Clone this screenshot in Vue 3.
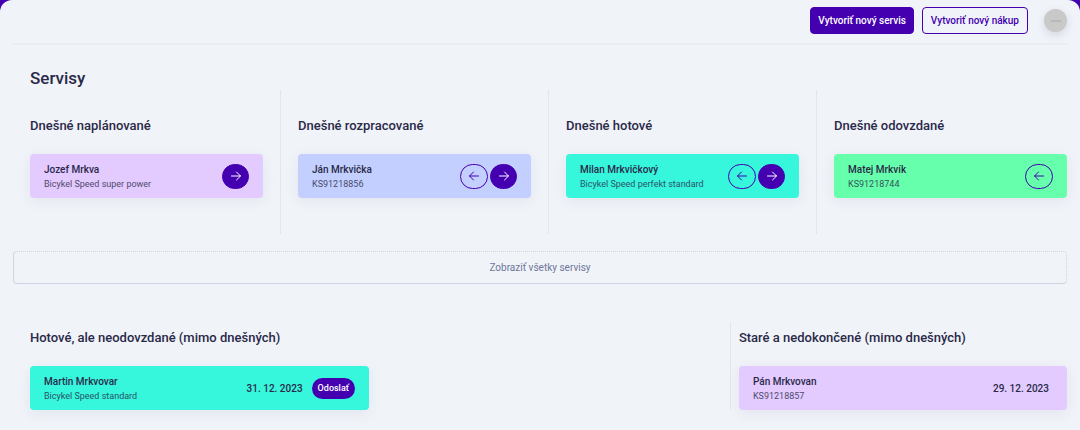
<script setup>
const columns = [
  { title: 'Dnešné naplánované', name: 'Jozef Mrkva', detail: 'Bicykel Speed super power', tone: 'lilac', back: false, next: true },
  { title: 'Dnešné rozpracované', name: 'Ján Mrkvička', detail: 'KS91218856', tone: 'blue', back: true, next: true },
  { title: 'Dnešné hotové', name: 'Milan Mrkvičkový', detail: 'Bicykel Speed perfekt standard', tone: 'teal', back: true, next: true },
  { title: 'Dnešné odovzdané', name: 'Matej Mrkvík', detail: 'KS91218744', tone: 'green', back: true, next: false }
]
</script>

<template>
  <div class="panel">
    <header class="topbar">
      <button type="button" class="btn primary">Vytvoriť nový servis</button>
      <button type="button" class="btn outline">Vytvoriť nový nákup</button>
      <button type="button" class="avatar" aria-label="Profil"><span class="avatar-mark"></span></button>
    </header>

    <main>
      <h1>Servisy</h1>

      <div class="board">
        <section v-for="col in columns" :key="col.title" class="column">
          <h2>{{ col.title }}</h2>
          <article class="card" :class="col.tone">
            <div class="info">
              <h3>{{ col.name }}</h3>
              <p>{{ col.detail }}</p>
            </div>
            <div class="actions">
              <button v-if="col.back" type="button" class="round back" aria-label="Späť">
                <svg viewBox="0 0 12 12"><path d="M10.5 6h-9M5.5 2 1.5 6l4 4" /></svg>
              </button>
              <button v-if="col.next" type="button" class="round next" aria-label="Ďalej">
                <svg viewBox="0 0 12 12"><path d="M1.5 6h9M6.5 2l4 4-4 4" /></svg>
              </button>
            </div>
          </article>
        </section>
      </div>

      <button type="button" class="show-all">Zobraziť všetky servisy</button>

      <div class="lower">
        <section class="ready">
          <h2>Hotové, ale neodovzdané (mimo dnešných)</h2>
          <div class="ready-list">
            <article class="card teal">
              <div class="info">
                <h3>Martin Mrkvovar</h3>
                <p>Bicykel Speed standard</p>
              </div>
              <time datetime="2023-12-31">31. 12. 2023</time>
              <button type="button" class="send">Odoslať</button>
            </article>
          </div>
        </section>
        <section class="old">
          <h2>Staré a nedokončené (mimo dnešných)</h2>
          <article class="card lilac">
            <div class="info">
              <h3>Pán Mrkvovan</h3>
              <p>KS91218857</p>
            </div>
            <time datetime="2023-12-29" class="last">29. 12. 2023</time>
          </article>
        </section>
      </div>
    </main>
  </div>
</template>

<style>
body {
  margin: 0;
  background: #4400b0;
}
</style>

<style scoped>
.panel {
  box-sizing: border-box;
  min-height: 100vh;
  padding: 0 13px 20px;
  border-radius: 12px 12px 0 0;
  background: #f0f3f8;
  color: #2a2949;
  font-family: Roboto, sans-serif;
}
button {
  margin: 0;
  padding: 0;
  font-family: inherit;
  cursor: pointer;
}
h1, h2, h3, p {
  margin: 0;
  font-weight: 500;
}
.topbar {
  display: flex;
  justify-content: flex-end;
  align-items: center;
  padding: 7px 0 9px;
  border-bottom: 2px solid #eaedf2;
}
.btn {
  box-sizing: border-box;
  height: 27px;
  padding: 0 8px;
  border: 1px solid #4400b0;
  border-radius: 4px;
  font-size: 10px;
  font-weight: 500;
}
.primary {
  padding: 0 7px;
  background: #4400b0;
  color: #fff;
}
.outline {
  margin-left: 8px;
  background: transparent;
  color: #4400b0;
}
.avatar {
  display: flex;
  align-items: center;
  justify-content: center;
  width: 23px;
  height: 23px;
  margin-left: 16px;
  border: 0;
  border-radius: 50%;
  background: #c9c9c9;
  box-shadow: 0 3px 8px rgba(40, 40, 80, 0.14);
}
.avatar-mark {
  width: 10px;
  height: 2px;
  background: #b8b8b8;
}
h1 {
  padding: 23px 17px 0;
  font-size: 17px;
  line-height: 20px;
}
h2 {
  font-size: 13px;
  line-height: 16px;
}
.board {
  display: flex;
  margin: 2px 0 17px 17px;
}
.column {
  flex: 1 1 0;
  min-width: 0;
  padding: 28px 0 36px;
}
.column + .column {
  margin-left: 17px;
  padding-left: 17px;
  border-left: 1px solid #e3e6ee;
}
.card {
  display: flex;
  align-items: center;
  box-sizing: border-box;
  min-height: 44px;
  margin-top: 20px;
  padding: 0 14px;
  border-radius: 4px;
  box-shadow: 0 3px 14px rgba(40, 40, 80, 0.07);
}
.lilac { background: #e3caff; }
.blue { background: #c3d0ff; }
.teal { background: #36f6dc; }
.green { background: #66ffac; }
.info {
  flex: 1;
  min-width: 0;
  padding-top: 2px;
}
h3 {
  font-size: 10px;
  line-height: 14px;
}
p {
  font-size: 9px;
  line-height: 14px;
  font-weight: 400;
  opacity: 0.8;
}
.actions {
  display: flex;
  gap: 2px;
}
.round {
  display: flex;
  align-items: center;
  justify-content: center;
  box-sizing: border-box;
  width: 28px;
  height: 25px;
  border: 1px solid #4400b0;
  border-radius: 13px;
  background: transparent;
  color: #4400b0;
}
.next {
  width: 27px;
  background: #4400b0;
  color: #fff;
}
.round svg {
  width: 12px;
  height: 12px;
  fill: none;
  stroke: currentColor;
  stroke-width: 1;
  stroke-linecap: round;
  stroke-linejoin: round;
}
.show-all {
  display: block;
  box-sizing: border-box;
  width: 100%;
  height: 33px;
  border: 1px solid #ced3e1;
  border-top-style: dotted;
  border-right-style: dotted;
  border-radius: 4px;
  background: transparent;
  color: #6f769c;
  font-size: 10px;
}
.lower {
  display: grid;
  grid-template-columns: 39fr 19fr;
  gap: 8px;
  margin: 38px 0 0 17px;
}
.lower h2 {
  padding-top: 8px;
}
.ready-list {
  display: grid;
  grid-template-columns: 1fr 1fr;
  gap: 14px;
}
.old {
  padding-left: 8px;
  border-left: 1px solid #e3e6ee;
}
time {
  font-size: 10px;
  font-weight: 500;
}
.last {
  padding-right: 4px;
}
.send {
  height: 21px;
  margin-left: 9px;
  padding: 0 6px;
  border: 0;
  border-radius: 11px;
  background: #4400b0;
  color: #fff;
  font-size: 9px;
  font-weight: 500;
}
</style>
